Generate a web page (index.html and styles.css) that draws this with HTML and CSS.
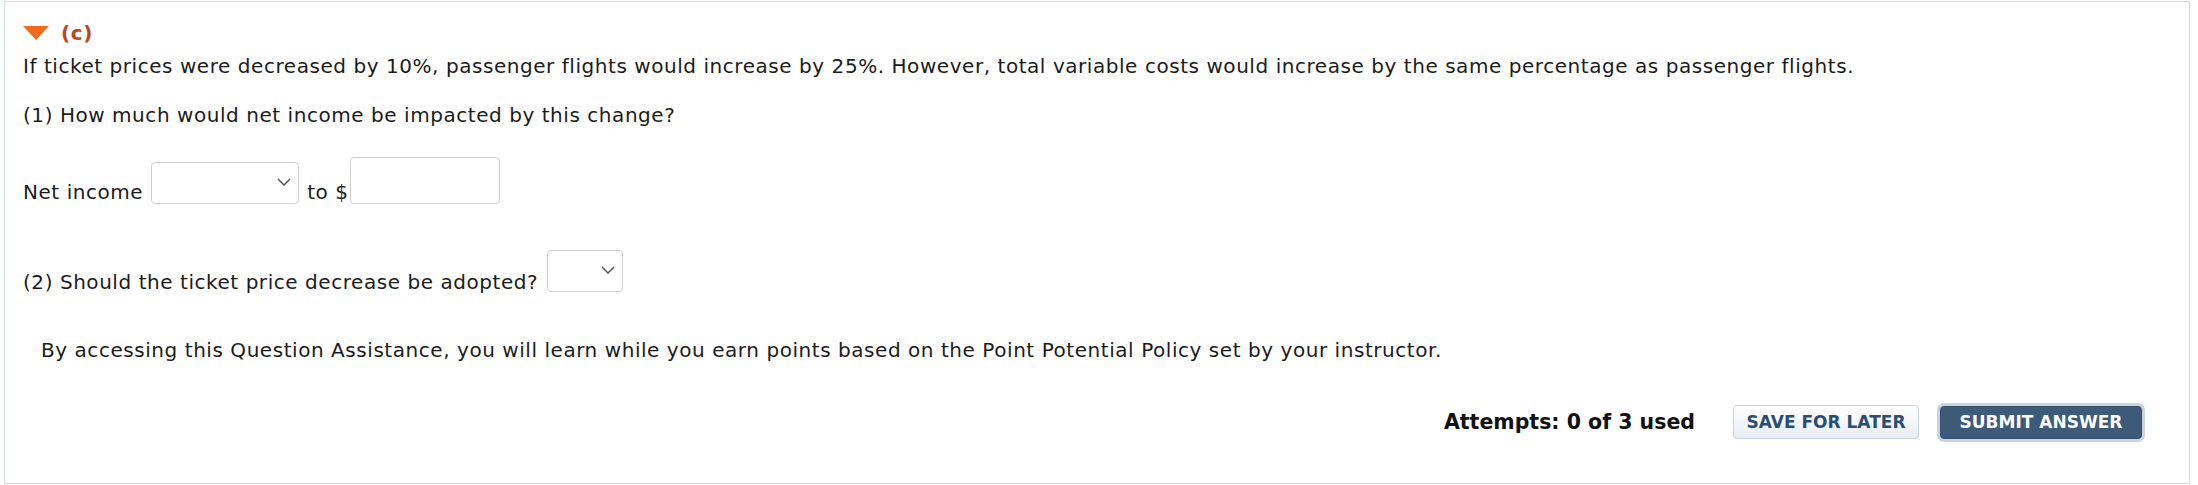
FILE: index.html
```html
<!DOCTYPE html>
<html lang="en">
<head>
<meta charset="utf-8">
<title>Question part (c)</title>
<link rel="stylesheet" href="styles.css">
</head>
<body>
<div class="panel">
  <div class="part-head">
    <svg class="caret" width="26" height="14" viewBox="0 0 26 14"><polygon points="0,0 26,0 13,14" fill="#f26a21"/></svg>
    <span class="part-label">(c)</span>
  </div>
  <p class="stem">If ticket prices were decreased by 10%, passenger flights would increase by 25%. However, total variable costs would increase by the same percentage as passenger flights.</p>
  <p class="q1">(1) How much would net income be impacted by this change?</p>
  <div class="row row-income">
    <span class="lbl">Net income</span>
    <div class="sel sel-wide">
      <select aria-label="direction"><option></option></select>
      <svg class="chev" width="14" height="8" viewBox="0 0 14 8"><polyline points="1,1 7,7 13,1" fill="none" stroke="#555" stroke-width="1.5"/></svg>
    </div>
    <span class="lbl to">to $</span>
    <input class="amount" type="text" aria-label="amount">
  </div>
  <div class="row row-adopt">
    <span class="lbl">(2) Should the ticket price decrease be adopted?</span>
    <div class="sel sel-narrow">
      <select aria-label="adopt"><option></option></select>
      <svg class="chev" width="14" height="8" viewBox="0 0 14 8"><polyline points="1,1 7,7 13,1" fill="none" stroke="#555" stroke-width="1.5"/></svg>
    </div>
  </div>
  <p class="assist">By accessing this Question Assistance, you will learn while you earn points based on the Point Potential Policy set by your instructor.</p>
  <div class="footer">
    <span class="attempts">Attempts: 0 of 3 used</span>
    <button class="btn btn-save" type="button">SAVE FOR LATER</button>
    <button class="btn btn-submit" type="button">SUBMIT ANSWER</button>
  </div>
</div>
</body>
</html>
```
FILE: styles.css
```css
html, body {
  margin: 0;
  padding: 0;
  background: #ffffff;
}
body {
  font-family: "DejaVu Sans", Verdana, sans-serif;
  font-size: 20px;
  line-height: 24px;
  color: #1b1b1b;
}
.panel {
  margin: 1px 8px 0 4px;
  border: 1px solid #d2dce6;
  padding: 19px 47px 42px 18px;
  box-sizing: border-box;
  height: 483px;
}
.part-head {
  display: flex;
  align-items: center;
  height: 24px;
  gap: 12px;
}
.caret {
  display: block;
  margin-top: -1px;
}
.part-label {
  font-weight: bold;
  color: #b9461c;
  letter-spacing: 0.6px;
}
.stem,
.q1,
.assist,
.lbl {
  letter-spacing: 0.55px;
}
.stem {
  margin: 9px 0 0 0;
}
.q1 {
  margin: 25px 0 0 0;
}
.row {
  display: flex;
  align-items: flex-end;
}
.row-income {
  margin-top: 30px;
}
.row-adopt {
  margin-top: 46px;
}
.lbl {
  display: block;
}
.row-adopt .lbl {
  margin-bottom: -2px;
}
.sel {
  position: relative;
  height: 42px;
  box-sizing: border-box;
}
.sel select {
  appearance: none;
  -webkit-appearance: none;
  width: 100%;
  height: 100%;
  border: 1px solid #cfcfcf;
  border-radius: 4px;
  background: #fff;
  margin: 0;
  padding: 0;
  font: inherit;
}
.sel .chev {
  position: absolute;
  top: 16px;
  right: 8px;
  pointer-events: none;
}
.sel-wide {
  width: 148px;
  margin-left: 8px;
}
.sel-narrow {
  width: 76px;
  margin-left: 9px;
}
.to {
  margin-left: 8px;
}
.amount {
  width: 150px;
  height: 47px;
  box-sizing: border-box;
  border: 1px solid #cfcfcf;
  border-radius: 4px;
  margin: 0 0 0 1px;
  padding: 0 6px;
  font: inherit;
}
.assist {
  margin: 46px 0 0 18px;
}
.footer {
  display: flex;
  justify-content: flex-end;
  align-items: center;
  height: 40px;
  margin-top: 40px;
}
.attempts {
  font-weight: bold;
  font-size: 20.5px;
  color: #111;
  margin-right: 38px;
}
.btn {
  font-family: "DejaVu Sans", Verdana, sans-serif;
  font-weight: bold;
  font-size: 17px;
  line-height: 20px;
  border-radius: 4px;
  cursor: pointer;
  box-sizing: border-box;
  margin: 0;
}
.btn-save {
  width: 186px;
  height: 34px;
  padding: 0;
  color: #2a4d77;
  background: linear-gradient(#ffffff, #e9eef4);
  border: 1px solid #c6d2de;
}
.btn-submit {
  width: 202px;
  height: 33px;
  margin-left: 21px;
  padding: 0;
  color: #ffffff;
  background: #3d5a79;
  border: 1px solid #34506d;
  box-shadow: 0 0 0 3px #c9d4df;
}
```
